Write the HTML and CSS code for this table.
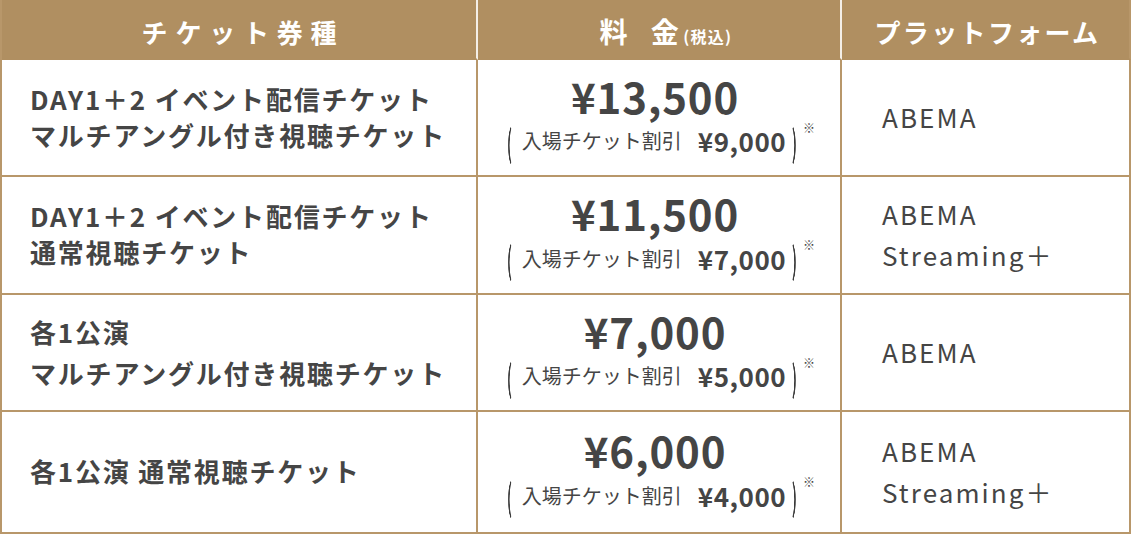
FILE: index.html
```html
<!DOCTYPE html>
<html lang="ja">
<head>
<meta charset="utf-8">
<link rel="stylesheet" href="styles.css">
</head>
<body>
<div class="table">
  <div class="th th-ticket">チケット券種</div>
  <div class="th th-price">料 金<span class="tax">(税込)</span></div>
  <div class="th th-platform">プラットフォーム</div>

  <div class="td name">DAY1＋2 イベント配信チケット<br>マルチアングル付き視聴チケット</div>
  <div class="td price">
    <div class="main">¥13,500</div>
    <div class="sub"><span class="paren">(</span><span class="label">入場チケット割引</span><b>¥9,000</b><span class="paren">)</span><span class="note">※</span></div>
  </div>
  <div class="td platform">ABEMA</div>

  <div class="td name">DAY1＋2 イベント配信チケット<br>通常視聴チケット</div>
  <div class="td price">
    <div class="main">¥11,500</div>
    <div class="sub"><span class="paren">(</span><span class="label">入場チケット割引</span><b>¥7,000</b><span class="paren">)</span><span class="note">※</span></div>
  </div>
  <div class="td platform">ABEMA<br>Streaming＋</div>

  <div class="td name loose">各1公演<br>マルチアングル付き視聴チケット</div>
  <div class="td price">
    <div class="main">¥7,000</div>
    <div class="sub"><span class="paren">(</span><span class="label">入場チケット割引</span><b>¥5,000</b><span class="paren">)</span><span class="note">※</span></div>
  </div>
  <div class="td platform">ABEMA</div>

  <div class="td name">各1公演 通常視聴チケット</div>
  <div class="td price">
    <div class="main">¥6,000</div>
    <div class="sub"><span class="paren">(</span><span class="label">入場チケット割引</span><b>¥4,000</b><span class="paren">)</span><span class="note">※</span></div>
  </div>
  <div class="td platform">ABEMA<br>Streaming＋</div>
</div>
</body>
</html>
```

FILE: styles.css
```css
html, body {
  margin: 0;
  padding: 0;
  background: #ffffff;
}

body {
  font-family: "Noto Sans CJK JP", "Noto Sans", sans-serif;
  color: #454545;
}

.table {
  display: grid;
  grid-template-columns: 476px 364px 289px;
  grid-template-rows: 60px 117px 118px 117px 122px;
  width: 1131px;
  box-sizing: border-box;
  border-left: 2px solid #b8976a;
}

.th, .td {
  box-sizing: border-box;
  border-right: 2px solid #b8976a;
  border-bottom: 2px solid #b8976a;
}

.th {
  background: #b08f61;
  color: #ffffff;
  font-weight: 700;
  font-size: 26px;
  display: flex;
  align-items: center;
  justify-content: center;
  border-right-color: #f4efe8;
  border-bottom-color: #b08f61;
  padding-top: 4px;
}

.th-ticket {
  letter-spacing: 0.3em;
  padding-left: 8px;
}

.th-price {
  font-size: 28px;
  letter-spacing: 0.3em;
  padding-left: 14px;
}

.th-platform {
  border-right-color: #b8976a;
  letter-spacing: 0.09em;
  padding-left: 4px;
}

.tax {
  font-size: 16px;
  letter-spacing: 0.08em;
  padding-top: 10px;
  margin-left: -4px;
}

.td {
  background: #ffffff;
}

.name {
  display: flex;
  align-items: center;
  padding-left: 28px;
  font-size: 26px;
  font-weight: 700;
  line-height: 36px;
  letter-spacing: 1.8px;
  padding-bottom: 2px;
}

.name.loose {
  line-height: 41px;
}

.price {
  display: flex;
  flex-direction: column;
  align-items: center;
  justify-content: center;
  padding-bottom: 2px;
}

.main {
  font-size: 42px;
  font-weight: 700;
  line-height: 46px;
  letter-spacing: 0.02em;
  margin-left: -8px;
}

.sub {
  display: flex;
  align-items: center;
  height: 40px;
  padding-top: 2px;
}

.label {
  font-size: 20px;
  margin-left: 6px;
}

.sub b {
  font-size: 26px;
  font-weight: 700;
  margin-left: 16px;
  margin-right: 2px;
  letter-spacing: 0.02em;
}

.paren {
  display: inline-block;
  font-size: 36px;
  font-weight: 500;
  line-height: 40px;
  color: #3a3a3a;
  transform: scaleX(0.42);
  will-change: transform;
  -webkit-font-smoothing: antialiased;
}

.note {
  font-size: 12px;
  align-self: flex-start;
  line-height: 14px;
  margin-left: 2px;
}

.platform {
  display: flex;
  align-items: center;
  padding-left: 40px;
  font-size: 26px;
  line-height: 41px;
  letter-spacing: 0.08em;
  padding-bottom: 2px;
}
```
